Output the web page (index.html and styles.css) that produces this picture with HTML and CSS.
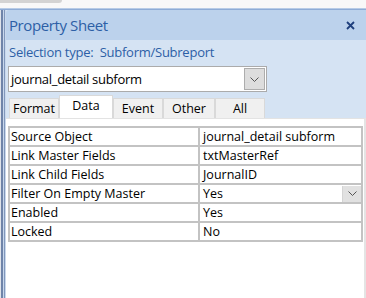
FILE: index.html
```html
<!DOCTYPE html>
<html>
<head>
<meta charset="utf-8">
<link rel="stylesheet" href="styles.css">
</head>
<body>
<div class="topstrip"><div class="toptab"></div></div>
<div class="topline"></div>
<div class="frame">
  <div class="frame-edge"></div>
  <div class="panel">
    <div class="titlebar">
      <span class="title">Property Sheet</span>
      <svg class="close" width="9" height="9" viewBox="0 0 9 9"><path d="M1 1 L8 8 M8 1 L1 8" stroke="#1f3f7c" stroke-width="1.8" fill="none"/></svg>
    </div>
    <div class="seltype">Selection type:&nbsp; Subform/Subreport</div>
    <div class="combo">
      <span class="combo-text">journal_detail subform</span>
      <span class="combo-btn"><svg width="9" height="5" viewBox="0 0 9 5"><path d="M0.5 0.5 L4.5 4.5 L8.5 0.5" stroke="#555" stroke-width="1" fill="none"/></svg></span>
    </div>
    <div class="tabs">
      <div class="tab tab-format">Format</div>
      <div class="tab tab-data active">Data</div>
      <div class="tab tab-event">Event</div>
      <div class="tab tab-other">Other</div>
      <div class="tab tab-all">All</div>
    </div>
    <div class="sheet">
      <div class="grid">
        <div class="cell label">Source Object</div><div class="cell value">journal_detail subform</div>
        <div class="cell label">Link Master Fields</div><div class="cell value">txtMasterRef</div>
        <div class="cell label">Link Child Fields</div><div class="cell value">JournalID</div>
        <div class="cell label">Filter On Empty Master</div><div class="cell value has-btn"><span>Yes</span><span class="cell-btn"><svg width="9" height="5" viewBox="0 0 9 5"><path d="M0.5 0.5 L4.5 4.5 L8.5 0.5" stroke="#555" stroke-width="1" fill="none"/></svg></span></div>
        <div class="cell label">Enabled</div><div class="cell value">Yes</div>
        <div class="cell label">Locked</div><div class="cell value">No</div>
      </div>
    </div>
  </div>
</div>
</body>
</html>
```
FILE: styles.css
```css
html, body {
  margin: 0;
  padding: 0;
}
body {
  width: 366px;
  height: 298px;
  overflow: hidden;
  background: #ffffff;
  font-family: "Open Sans", "Noto Sans", sans-serif;
}
.topstrip {
  height: 8px;
  background: #f8f8f8;
}
.toptab {
  width: 62px;
  height: 3px;
  background: #d3d3d3;
  border-bottom-right-radius: 3px;
}
.topline {
  height: 2px;
  background: linear-gradient(#b7cbe6 0 1px, #8eacd6 1px 2px);
}
.frame {
  display: flex;
  height: 288px;
}
.frame-edge {
  width: 6px;
  background: linear-gradient(to right, #dfe3ea 0 1px, #6f84a9 1px 3px, #c9d8ec 3px 4px, #8197bb 4px 5px, #c9d8ec 5px 6px);
}
.panel {
  flex: 1;
  display: flex;
  flex-direction: column;
  background: #d5e3f3;
}
.titlebar {
  height: 30px;
  flex: none;
  display: flex;
  align-items: center;
  justify-content: space-between;
  padding: 0 11px 0 3px;
  background: #bcd2ec;
  border-top-left-radius: 3px;
}
.title {
  font-size: 15px;
  color: #2d5fa6;
  letter-spacing: -0.4px;
}
.close {
  display: block;
}
.seltype {
  height: 24px;
  flex: none;
  display: flex;
  align-items: center;
  padding-left: 3px;
  font-size: 13px;
  color: #2d5fa6;
  letter-spacing: -0.25px;
}
.combo {
  margin: 2px 0 0 2px;
  width: 257px;
  height: 24px;
  flex: none;
  display: flex;
  align-items: center;
  justify-content: space-between;
  background: #ffffff;
  border: 1px solid #ababab;
}
.combo-text {
  padding-left: 2px;
  font-size: 13px;
  color: #000;
  letter-spacing: -0.3px;
}
.combo-btn {
  width: 19px;
  height: 20px;
  margin-right: 1px;
  display: flex;
  align-items: center;
  justify-content: center;
  background: #dddddd;
  border: 1px solid #adadad;
}
.tabs {
  display: flex;
  align-items: flex-end;
  height: 23px;
  margin-top: 3px;
  padding-left: 3px;
  flex: none;
}
.tab {
  height: 20px;
  box-sizing: border-box;
  display: flex;
  align-items: center;
  justify-content: center;
  font-size: 12.5px;
  color: #000;
  background: #f0f0f0;
  border: 1px solid #d9d9d9;
  border-bottom: none;
}
.tab-format { width: 50px; }
.tab-data { width: 54px; }
.tab-event { width: 50px; }
.tab-other { width: 52px; }
.tab-all { width: 50px; }
.tab.active {
  height: 23px;
  background: #ffffff;
  border-color: #d9d9d9;
  padding-bottom: 3px;
}
.sheet {
  flex: 1;
  background: #ffffff;
  border-top: 1px solid #e3e3e3;
  border-right: 2px solid #e4e4e4;
  padding: 7px 1px 0 2px;
}
.grid {
  display: grid;
  grid-template-columns: 188px 1fr;
  grid-auto-rows: 17px;
  gap: 2px;
  padding: 2px;
  background: #c3c3c3;
}
.cell {
  background: #ffffff;
  font-size: 12.5px;
  color: #000;
  display: flex;
  align-items: center;
  white-space: nowrap;
  overflow: hidden;
}
.label {
  padding-left: 1px;
}
.value {
  padding-left: 3px;
}
.has-btn {
  justify-content: space-between;
}
.cell-btn {
  width: 18px;
  height: 16px;
  display: flex;
  align-items: center;
  justify-content: center;
  background: #e1e1e1;
  border-left: 1px solid #d4d4d4;
}
```
